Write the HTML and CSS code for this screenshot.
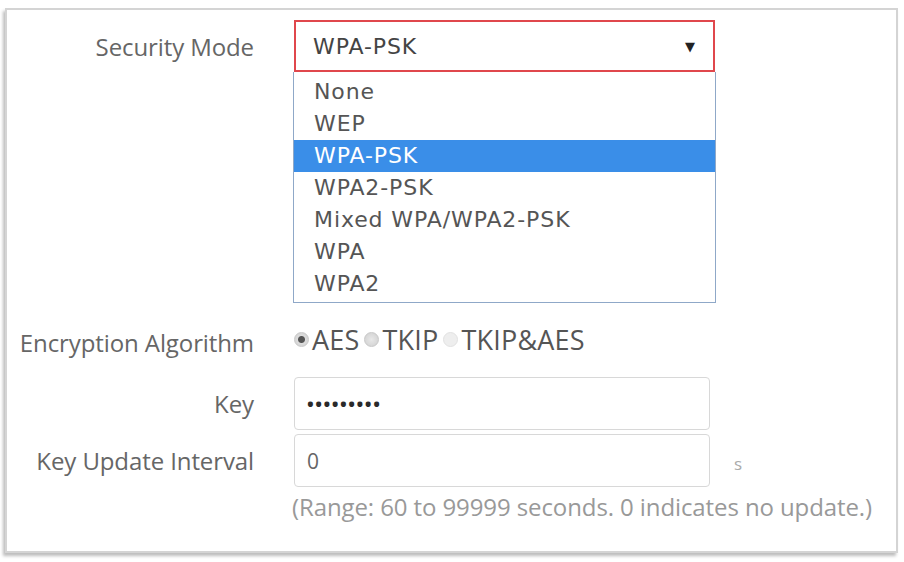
FILE: index.html
```html
<!DOCTYPE html>
<html lang="en">

<head>
    <meta charset="UTF-8" />
    <meta name="viewport" content="width=device-width, initial-scale=1.0" />
    <title>Wireless Security</title>
    <link rel="stylesheet" href="styles.css">
</head>

<body>
    <div class="painel">
        <div class="linha linha-modo">
            <label class="rotulo">Security Mode</label>
            <div class="campo-select">
                <div class="select">
                    <span>WPA-PSK</span>
                    <span class="seta">&#9660;</span>
                </div>
                <ul class="lista">
                    <li>None</li>
                    <li>WEP</li>
                    <li class="ativo">WPA-PSK</li>
                    <li>WPA2-PSK</li>
                    <li>Mixed WPA/WPA2-PSK</li>
                    <li>WPA</li>
                    <li>WPA2</li>
                </ul>
            </div>
        </div>

        <div class="linha linha-cripto">
            <label class="rotulo">Encryption Algorithm</label>
            <div class="radios">
                <span class="radio marcado"></span>AES
                <span class="radio"></span>TKIP
                <span class="radio claro"></span>TKIP&amp;AES
            </div>
        </div>

        <div class="linha linha-chave">
            <label class="rotulo">Key</label>
            <div class="entrada senha">&bull;&bull;&bull;&bull;&bull;&bull;&bull;&bull;&bull;</div>
        </div>

        <div class="linha linha-intervalo">
            <label class="rotulo">Key Update Interval</label>
            <div class="entrada">0</div>
            <span class="unidade">s</span>
        </div>

        <p class="dica">(Range: 60 to 99999 seconds. 0 indicates no update.)</p>
    </div>
</body>

</html>
```

FILE: styles.css
```css
body {
    margin: 0;
    padding: 8px 6px 7px 5px;
    background-color: #fff;
    font-family: 'Open Sans', 'Noto Sans', sans-serif;
    color: #555;
}

.painel {
    height: 545px;
    box-sizing: border-box;
    border: 2px solid #d4d4d4;
    box-shadow: -2px 3px 3px #bdbdbd;
    padding-top: 10px;
}

.linha {
    display: grid;
    grid-template-columns: 247px 421px auto;
    column-gap: 40px;
    align-items: center;
}

.rotulo {
    justify-self: end;
    font-size: 24px;
    color: #666;
    letter-spacing: -0.1px;
}

.campo-select {
    position: relative;
}

.select {
    height: 52px;
    box-sizing: border-box;
    border: 2px solid #e0474c;
    display: flex;
    align-items: center;
    justify-content: space-between;
    padding: 0 17px 0 17px;
    font-family: 'DejaVu Sans', sans-serif;
    font-size: 22px;
    letter-spacing: 0.9px;
    color: #444;
}

.seta {
    font-size: 13px;
    color: #222;
}

.lista {
    position: absolute;
    top: 52px;
    left: -1px;
    width: 421px;
    margin: 0;
    padding: 4px 0 0;
    list-style: none;
    border: 1px solid #8fa8c8;
    border-top: none;
    background: #fff;
    height: 226px;
}

.lista li {
    height: 32px;
    line-height: 32px;
    padding-left: 20px;
    font-family: 'DejaVu Sans', sans-serif;
    font-size: 22px;
    letter-spacing: 0.9px;
    color: #555;
}

.lista li.ativo {
    background-color: #3a8ee8;
    color: #fff;
}

.linha-cripto {
    margin-top: 254px;
}

.radios {
    display: flex;
    align-items: center;
    font-size: 27px;
    color: #555;
    letter-spacing: 0.2px;
    margin-left: 0;
    margin-top: -6px;
}

.radio {
    width: 15px;
    height: 15px;
    border-radius: 50%;
    background: radial-gradient(circle, #e8e8e8 0, #cfcfcf 100%);
    border: 1px solid #c8c8c8;
    box-sizing: border-box;
    margin: 0 3px 0 5px;
}

.radio.marcado {
    margin-left: 0;
    background: radial-gradient(circle, #555 0, #555 3px, #ddd 4px, #ccc 100%);
}

.radio.claro {
    background: #eee;
    border-color: #e2e2e2;
}

.linha-chave {
    margin-top: 18px;
    grid-template-columns: 247px 416px auto;
}

.entrada {
    height: 53px;
    box-sizing: border-box;
    border: 1px solid #d8d8d8;
    border-radius: 4px;
    display: flex;
    align-items: center;
    padding-left: 12px;
    font-size: 21px;
    color: #666;
}

.senha {
    font-size: 18px;
    font-weight: 700;
    color: #2a2a2a;
    letter-spacing: 1.5px;
}

.linha-intervalo {
    margin-top: 4px;
    grid-template-columns: 247px 416px auto;
}

.unidade {
    font-size: 17px;
    color: #aaa;
    margin-left: -16px;
    padding-top: 6px;
}

.dica {
    margin: 3px 0 0 285px;
    font-size: 24px;
    color: #999;
    letter-spacing: -0.1px;
}
```
